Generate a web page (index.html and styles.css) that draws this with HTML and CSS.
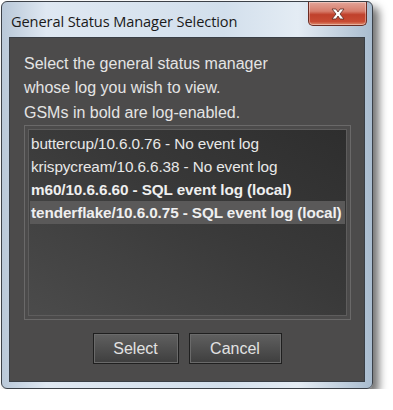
FILE: index.html
```html
<!DOCTYPE html>
<html lang="en">
<head>
    <meta charset="UTF-8">
    <meta name="viewport" content="width=device-width, initial-scale=1.0">
    <title>General Status Manager Selection</title>
    <link rel="stylesheet" href="styles.css">
</head>
<body>
    <div class="window">
        <div class="titlebar">
            <span class="title">General Status Manager Selection</span>
            <button class="close-btn" aria-label="Close">
                <svg width="16" height="12" viewBox="0 0 16 12">
                    <path d="M2 1 H6 L8 4 L10 1 H14 L10 6 L14 11 H10 L8 8 L6 11 H2 L6 6 Z" fill="#fff" stroke="#5a2a22" stroke-width="0.8" stroke-linejoin="round"/>
                </svg>
            </button>
        </div>
        <div class="panel">
            <p class="intro">Select the general status manager<br>whose log you wish to view.<br>GSMs in bold are log-enabled.</p>
            <div class="list-frame">
                <ul class="gsm-list">
                    <li>buttercup/10.6.0.76 - No event log</li>
                    <li>krispycream/10.6.6.38 - No event log</li>
                    <li class="enabled">m60/10.6.6.60 - SQL event log (local)</li>
                    <li class="enabled selected">tenderflake/10.6.0.75 - SQL event log (local)</li>
                </ul>
            </div>
            <div class="button-row">
                <button class="dlg-btn select-btn">Select</button>
                <button class="dlg-btn cancel-btn">Cancel</button>
            </div>
        </div>
    </div>
</body>
</html>
```

FILE: styles.css
```css
body {
    margin: 0;
    padding: 1px 0 0 1px;
    background-color: white;
    font-family: "Liberation Sans", Arial, sans-serif;
}
.window {
    box-sizing: border-box;
    width: 372px;
    height: 388px;
    border: 1px solid #3c4148;
    border-radius: 6px;
    padding: 0 7px 6px 7px;
    display: flex;
    flex-direction: column;
    background: linear-gradient(to right, #b9c8d8 0%, #dfe8f2 12%, #d2dfec 60%, #e4ecf4 80%, #a9bccf 100%);
    box-shadow: 6px 6px 8px rgba(0,0,0,0.55);
}
.titlebar {
    height: 35px;
    display: flex;
    align-items: flex-start;
    justify-content: space-between;
    flex-shrink: 0;
}
.title {
    margin: 9px 0 0 2px;
    font-family: "Open Sans", "DejaVu Sans", sans-serif;
    font-size: 14.6px;
    letter-spacing: -0.1px;
    color: #1a1a1a;
}
.close-btn {
    width: 59px;
    height: 24px;
    margin: 0 -2px 0 0;
    padding: 0;
    border: 1px solid #6b2b22;
    border-top: none;
    border-radius: 0 0 5px 5px;
    background: linear-gradient(to bottom, #e3a498 0%, #d77d6c 40%, #c0412c 55%, #c84b33 85%, #de8e70 100%);
    box-shadow: inset 0 0 0 1px rgba(255,255,255,0.35);
    display: flex;
    align-items: center;
    justify-content: center;
}
.panel {
    flex: 1;
    background-color: #4c4b4b;
    border: 1px solid #3a3f46;
    padding: 14px 14px 0 14px;
    display: flex;
    flex-direction: column;
}
.intro {
    margin: 0;
    height: 73px;
    color: #e4e4e4;
    font-size: 16px;
    line-height: 24.3px;
}
.list-frame {
    width: 327px;
    height: 195px;
    box-sizing: border-box;
    border: 1px solid #6a6969;
    padding: 3px;
}
.gsm-list {
    list-style: none;
    margin: 0;
    height: 100%;
    box-sizing: border-box;
    padding: 2px 1px;
    border: 1px solid #5e5d5d;
    background: linear-gradient(to top right, #4b4b4b 0%, #393939 55%, #2e2e2e 100%);
}
.gsm-list li {
    height: 23px;
    line-height: 23px;
    padding-left: 1px;
    color: #e8e8e8;
    font-size: 15.3px;
    letter-spacing: -0.1px;
    white-space: nowrap;
}
.gsm-list .enabled {
    font-weight: bold;
    color: #efefef;
}
.gsm-list .selected {
    background-color: #5a5959;
}
.button-row {
    display: flex;
    justify-content: center;
    gap: 10px;
    margin-top: 13px;
}
.dlg-btn {
    height: 31px;
    padding: 0;
    border: 1px solid #1f1f1f;
    box-shadow: inset 0 0 0 1px #6a6a6a;
    background: linear-gradient(to bottom, #606060 0%, #4f4f4f 50%, #3e3e3e 100%);
    color: #e2e2e2;
    font-family: "Liberation Sans", Arial, sans-serif;
    font-size: 16px;
    cursor: pointer;
}
.select-btn {
    width: 86px;
}
.cancel-btn {
    width: 93px;
}
```
